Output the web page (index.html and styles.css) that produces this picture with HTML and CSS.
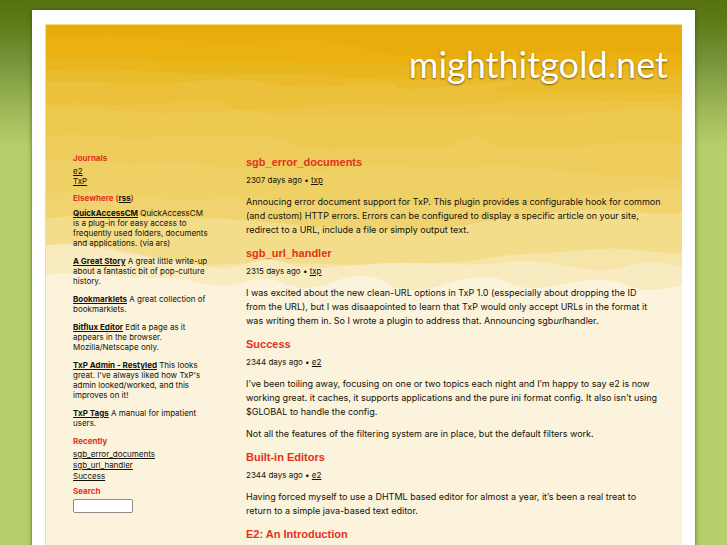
FILE: index.html
```html
<!DOCTYPE html>
<html lang="en">
<head>
    <meta charset="UTF-8">
    <meta name="viewport" content="width=device-width, initial-scale=1.0">
    <title>mighthitgold.net</title>
    <link rel="stylesheet" href="styles.css">
</head>
<body>
    <div class="page">
        <div class="canvas">
            <svg class="waves" viewBox="0 0 636 270" preserveAspectRatio="none" aria-hidden="true">
                <rect width="636" height="270" fill="#e8ad0c"/>
                <path fill="#ebb111" d="M0 14Q60 9 120 14T260 14Q290 16 320 24T390 33T480 29T560 27T636 29V270H0Z"/>
                <path fill="#eab61d" d="M0 33Q40 31 90 34T170 36T240 37T310 39T400 42T520 42T636 43V270H0Z"/>
                <path fill="#eabb2a" d="M0 45Q50 42 100 46T200 49T280 51T360 54T460 53T560 50T636 52V270H0Z"/>
                <path fill="#ebc03a" d="M0 57Q30 55 70 58T150 56T220 58T300 60T350 61T420 60T460 61T490 68T540 67T600 68T636 67V270H0Z"/>
                <path fill="#ebc03a" d="M0 70Q50 67 90 70T170 72T230 75T310 78T380 78T450 77T520 76T580 76T636 74V270H0Z"/>
                <path fill="#ecc546" d="M0 79Q30 76 60 79T130 77T180 80T240 83T330 80T400 81T450 78T490 76T560 77T636 75V270H0Z"/>
                <path fill="#edc94f" d="M0 85Q30 82 70 86T150 87T210 87T270 90T340 91T400 90T470 89T510 90T560 86T636 86V270H0Z"/>
                <path fill="#eecd5d" d="M0 111Q30 108 60 111T110 112T170 110T225 110Q240 118 255 122T310 124T370 123T405 121Q420 113 429 110Q442 118 455 121T500 123T550 119T636 118V270H0Z"/>
                <path fill="#efd065" d="M0 135Q20 132 50 136T90 139T120 137T160 140T195 143T250 144T310 142T370 142T430 142T490 143T545 149T590 151T636 154V270H0Z"/>
                <path fill="#f0d36e" d="M0 169Q40 165 80 170T150 174T200 173T260 176T340 179T430 180T490 178T560 168T636 164V270H0Z"/>
                <path fill="#f3dc8a" d="M0 193Q40 189 80 191T150 193T210 196T280 202T350 206T420 200Q450 194 480 190T540 185T590 187T636 188V270H0Z"/>
                <path fill="#f6e5a8" d="M0 220Q30 216 60 222T120 235T170 240T230 238T300 240T370 239T420 237Q450 230 480 229T540 225T590 225T636 228V270H0Z"/>
                <path fill="#f8ebc0" d="M0 221Q30 217 60 224T110 233T155 241T200 239T240 238T290 242T340 238T400 239T460 237T520 241T580 241T636 242V270H0Z"/>
                <path fill="#fbf3db" d="M0 250Q30 246 60 250T110 253T155 258T200 257T240 259T290 256T340 258T400 259T460 257T520 259T580 260T636 260V270H0Z"/>
            </svg>

            <div class="content">
                <div class="header">
                    <h1>mighthitgold.net</h1>
                </div>

                <div class="columns">
                    <div class="sidebar">
                        <h3>Journals</h3>
                        <ul class="journals">
                            <li><a href="#">e2</a></li>
                            <li><a href="#">TxP</a></li>
                        </ul>

                        <h3>Elsewhere (<a href="#">rss</a>)</h3>
                        <p><a href="#">QuickAccessCM</a> QuickAccessCM is a plug-in for easy access to frequently used folders, documents and applications. (via ars)</p>
                        <p><a href="#">A Great Story</a> A great little write-up about a fantastic bit of pop-culture history.</p>
                        <p><a href="#">Bookmarklets</a> A great collection of bookmarklets.</p>
                        <p><a href="#">Bitflux Editor</a> Edit a page as it appears in the browser. Mozilla/Netscape only.</p>
                        <p><a href="#">TxP Admin - Restyled</a> This looks great. I've always liked how TxP's admin looked/worked, and this improves on it!</p>
                        <p><a href="#">TxP Tags</a> A manual for impatient users.</p>

                        <h3>Recently</h3>
                        <ul class="recent">
                            <li><a href="#">sgb_error_documents</a></li>
                            <li><a href="#">sgb_url_handler</a></li>
                            <li><a href="#">Success</a></li>
                        </ul>

                        <form>
                            <h3><label for="search">Search</label></h3>
                            <input type="text" id="search">
                        </form>
                    </div>

                    <div class="main">
                        <div class="post">
                            <h2>sgb_error_documents</h2>
                            <p class="meta">2307 days ago • <a href="#">txp</a></p>
                            <p>Annoucing error document support for TxP. This plugin provides a configurable hook for common<br>
                            (and custom) HTTP errors. Errors can be configured to display a specific article on your site,<br>
                            redirect to a URL, include a file or simply output text.</p>
                        </div>

                        <div class="post">
                            <h2>sgb_url_handler</h2>
                            <p class="meta">2315 days ago • <a href="#">txp</a></p>
                            <p>I was excited about the new clean-URL options in TxP 1.0 (esspecially about dropping the ID<br>
                            from the URL), but I was disaapointed to learn that TxP would only accept URLs in the format it<br>
                            was writing them in. So I wrote a plugin to address that. Announcing sgb<em>url</em>handler.</p>
                        </div>

                        <div class="post">
                            <h2>Success</h2>
                            <p class="meta">2344 days ago • <a href="#">e2</a></p>
                            <p>I’ve been toiling away, focusing on one or two topics each night and I’m happy to say e2 is now<br>
                            working great. it caches, it supports applications and the pure ini format config. It also isn’t using<br>
                            $GLOBAL to handle the config.</p>
                            <p>Not all the features of the filtering system are in place, but the default filters work.</p>
                        </div>

                        <div class="post">
                            <h2>Built-in Editors</h2>
                            <p class="meta">2344 days ago • <a href="#">e2</a></p>
                            <p>Having forced myself to use a DHTML based editor for almost a year, it’s been a real treat to<br>
                            return to a simple java-based text editor.</p>
                        </div>

                        <div class="post">
                            <h2>E2: An Introduction</h2>
                        </div>
                    </div>
                </div>
            </div>
        </div>
    </div>
</body>
</html>
```
FILE: styles.css
```css
* { margin: 0; padding: 0; box-sizing: border-box; }
html { overflow-x: hidden; scrollbar-width: none; }
body {
    font-family: Inter, Arial, sans-serif;
    background: #b4cf6c linear-gradient(#56730e 0, #5c7a16 20px, #76933a 60px, #9bb555 105px, #b4cf6c 147px) no-repeat;
    min-height: 100vh;
    padding: 10px 32px 0;
    color: #14120a;
}
a { color: #14120a; }
.page {
    background: white;
    padding: 14px 13px 0;
    box-shadow: 0 0 4px rgba(50,75,0,0.8);
}

/* waves and content share one grid cell */
.canvas {
    display: grid;
    grid-template-columns: minmax(0, 1fr);
    background: #fbf3db;
    border: 1px solid #f3dc8a;
    border-width: 1px 0 0 1px;
}
.waves, .content { grid-area: 1 / 1; }
.waves { width: 100%; height: 270px; }

.header { padding: 15px 14px 0; height: 128px; text-align: right; }
h1 {
    font-family: Lato, sans-serif;
    font-size: 36px;
    font-weight: 400;
    line-height: 48px;
    color: white;
    text-shadow: 0 1px 2px rgba(90,60,0,0.8);
}

.columns { display: flex; gap: 37px; padding: 0 12px 0 27px; }
.sidebar { flex: 0 0 136px; font-size: 8px; line-height: 10px; }
.sidebar h3 { font-size: 8px; line-height: 10px; color: #e2311d; margin-bottom: 3px; }
.sidebar ul { list-style: none; margin-bottom: 7px; }
.sidebar p { margin-bottom: 8px; }
.sidebar p a { font-weight: bold; }
.sidebar h3 + p { padding-top: 2px; }
.sidebar .recent { margin-bottom: 4px; }
.recent li { line-height: 11px; }
.sidebar input {
    display: block;
    width: 60px;
    height: 14px;
    border: 1px solid #8f8b80;
    border-radius: 2px;
    background: white;
    font-size: 9px;
}

.main { flex: 1; min-width: 0; font-size: 9px; line-height: 14px; }
.post { margin: 2px 0 9px; }
.post + .post { margin-top: 0; }
.post h2 {
    font-family: "Liberation Sans", Arial, sans-serif;
    font-size: 11px;
    line-height: 14px;
    color: #e2311d;
    margin-bottom: 5px;
}
.post p + p { margin-top: 8px; }
.post .meta { font-size: 8px; line-height: 13px; }
```
